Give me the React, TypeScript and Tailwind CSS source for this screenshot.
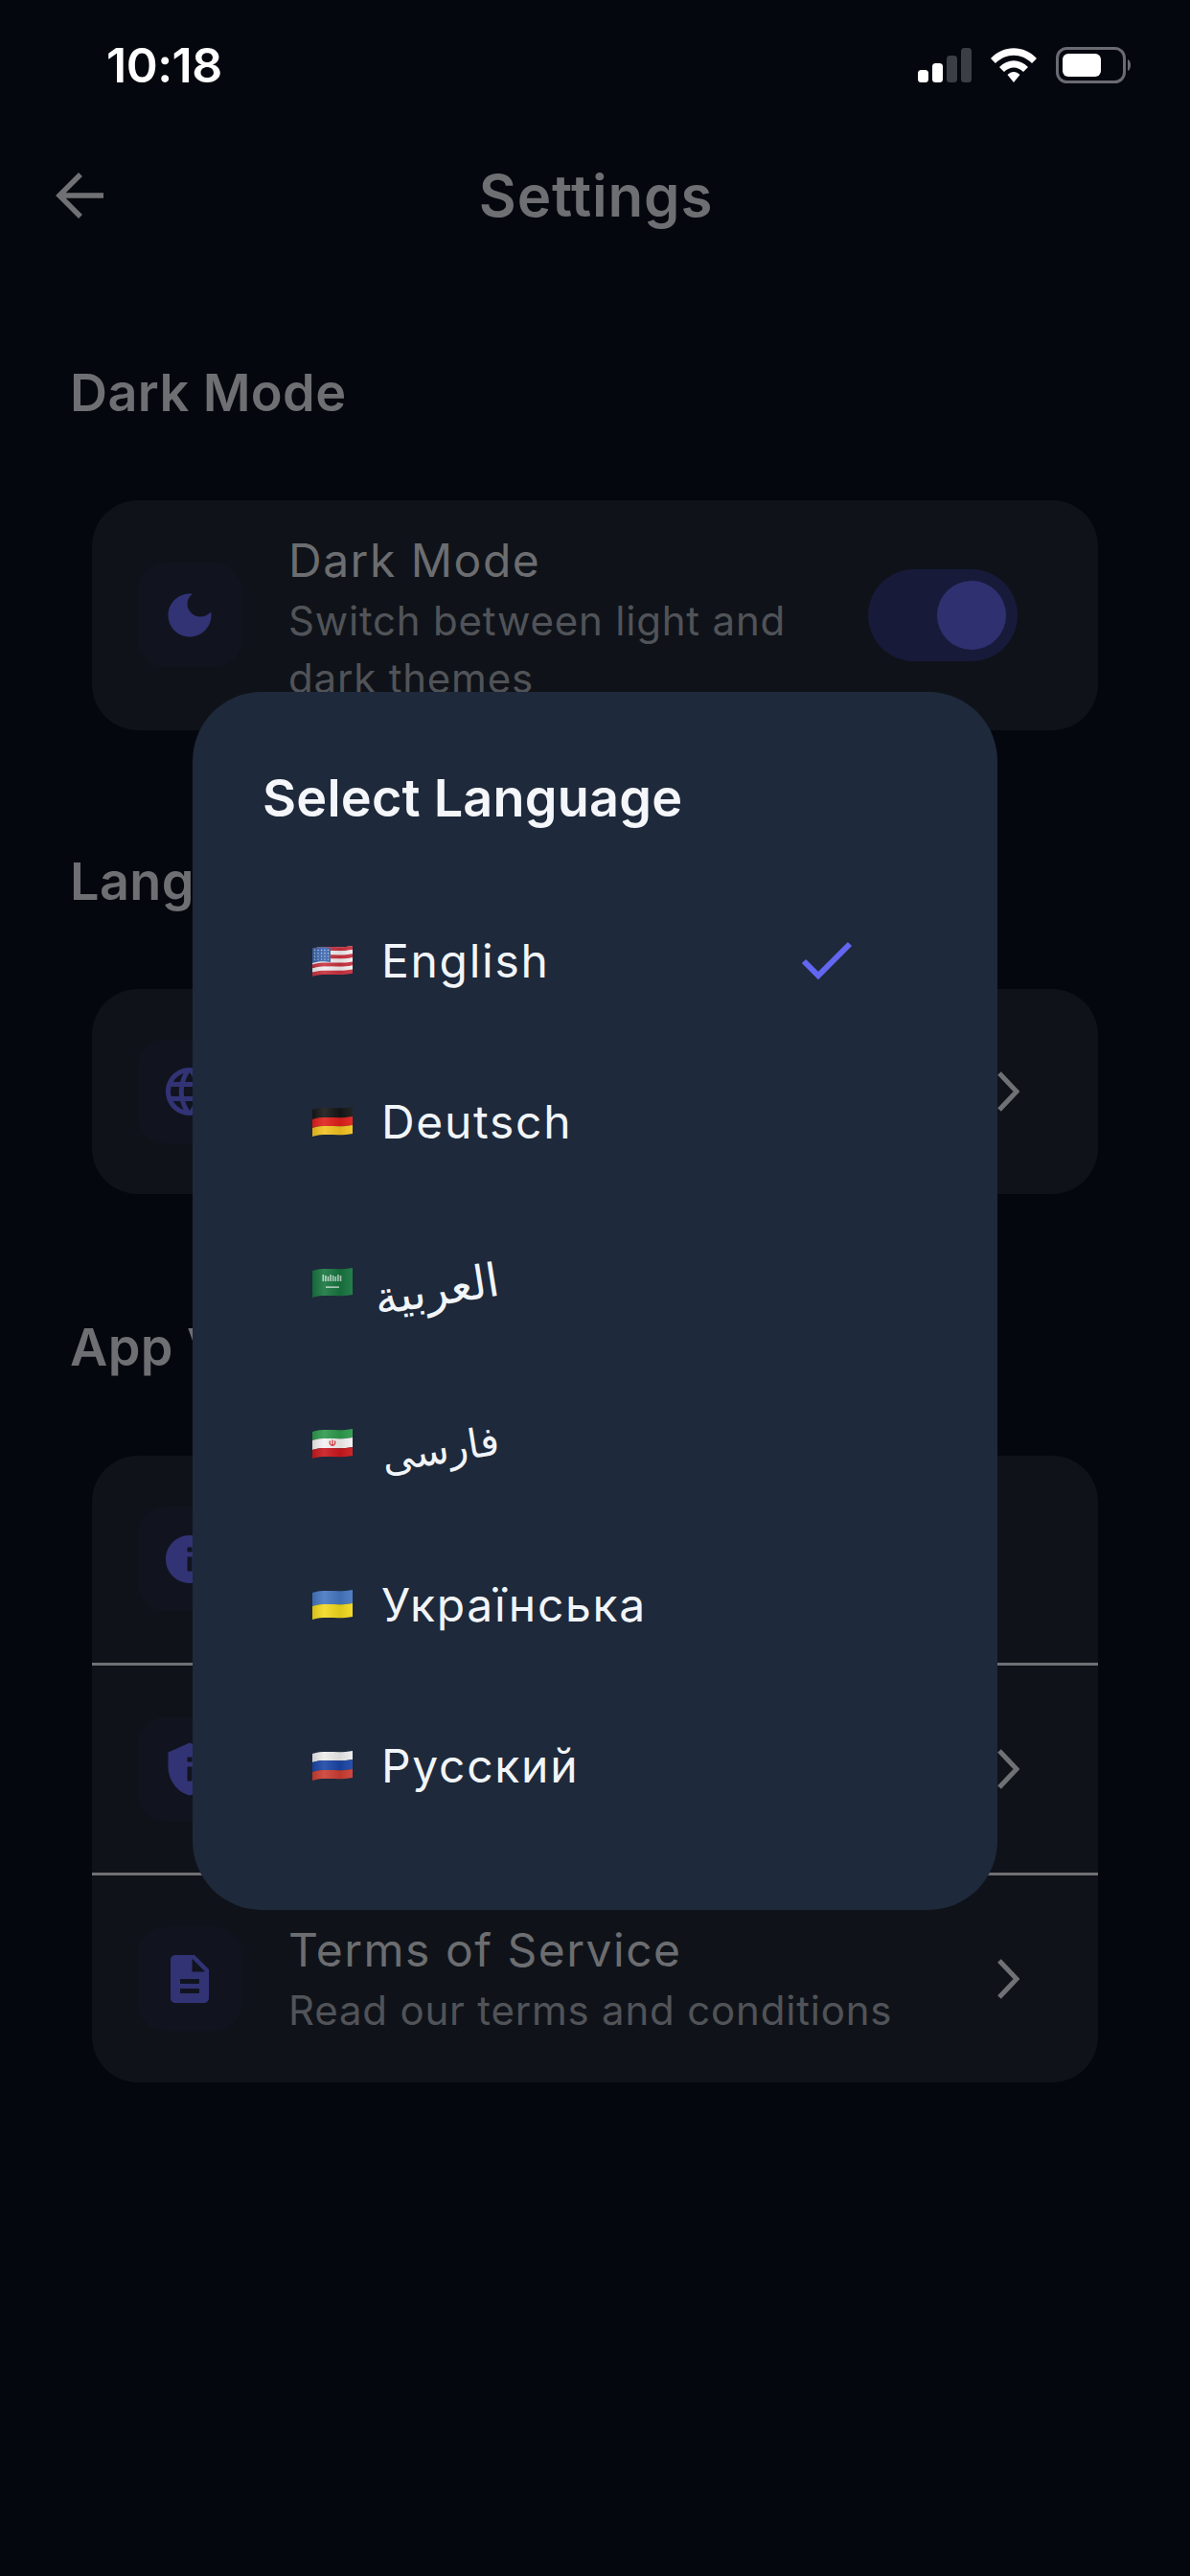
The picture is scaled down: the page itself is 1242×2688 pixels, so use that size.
import React from "react";
import { MdLanguage, MdInfo, MdPrivacyTip, MdDescription } from "react-icons/md";

function band(y1: number, y2: number) {
  return `M0 ${y1 + 3} C 12 ${y1 - 1}, 28 ${y1 + 3}, 42 ${y1} V ${y2} C 28 ${y2 + 3}, 12 ${y2 - 1}, 0 ${y2 + 3} Z`;
}

function Flag({ bands, children }: { bands: [number, number, string][]; children?: React.ReactNode }) {
  return (
    <svg viewBox="0 0 42 34" className="w-[42px] h-[34px] shrink-0">
      <defs>
        <linearGradient id="flag-wave" x1="0" x2="1" y1="0" y2="0">
          <stop offset="0" stopColor="#000" stopOpacity="0.12" />
          <stop offset="0.3" stopColor="#fff" stopOpacity="0.1" />
          <stop offset="0.7" stopColor="#000" stopOpacity="0.08" />
          <stop offset="1" stopColor="#fff" stopOpacity="0.06" />
        </linearGradient>
      </defs>
      {bands.map(([a, b, c], i) => (
        <path key={i} d={band(a, b)} fill={c} />
      ))}
      {children}
      <path d={band(1, 29)} fill="url(#flag-wave)" />
    </svg>
  );
}

const US = () => {
  const stripes: [number, number, string][] = [];
  for (let i = 0; i < 7; i++) {
    stripes.push([1 + i * 4.1, 5.2 + i * 4.1, i % 2 === 0 ? "#c8323f" : "#f1eef0"]);
  }
  stripes[0][1] = 5;
  return (
    <Flag bands={[[1, 29, "#f1eef0"], ...stripes]}>
      <path d="M0 4 C 6 2, 12 2, 19 3 V 18 C 12 17, 6 17, 0 19 Z" fill="#3b66ad" />
      {[0, 1, 2, 3].map((r) =>
        [0, 1, 2, 3, 4].map((c) => (
          <circle key={`${r}-${c}`} cx={2.5 + c * 3.5} cy={5.5 + r * 3.2} r="0.7" fill="#c9d6ee" />
        ))
      )}
    </Flag>
  );
};
const DE = () => <Flag bands={[[1, 11, "#161616"], [11, 20, "#e0201b"], [20, 29, "#f2c321"]]} />;
const SA = () => (
  <Flag bands={[[1, 29, "#17753f"]]}>
    {[0, 1, 2, 3, 4, 5, 6, 7].map((i) => (
      <rect key={i} x={10.5 + i * 2.6} y={8 + (i % 3)} width="1.6" height={7 - (i % 3)} fill="#cfe3d6" opacity="0.85" />
    ))}
    <rect x="14" y="20.5" width="14" height="1.2" fill="#e4efe8" />
  </Flag>
);
const IR = () => (
  <Flag bands={[[1, 10, "#2d9a4c"], [10, 20, "#f3f1f1"], [20, 29, "#c9181e"]]}>
    <path d="M21 12.5 V 19 M18.5 13.5 C 17.5 16, 18.5 18, 21 18.5 C 23.5 18, 24.5 16, 23.5 13.5" fill="none" stroke="#d8232a" strokeWidth="1.2" />
  </Flag>
);
const UA = () => <Flag bands={[[1, 15, "#4577c1"], [15, 29, "#f2d91f"]]} />;
const RU = () => <Flag bands={[[1, 10, "#ececec"], [10, 20, "#1b45a6"], [20, 29, "#cb3d33"]]} />;

const languages: { flag: React.ReactNode; label: string; script?: string }[] = [
  { flag: <US />, label: "English" },
  { flag: <DE />, label: "Deutsch" },
  { flag: <SA />, label: "العربية", script: "text-[48px] ml-[-8px] -rotate-[9deg] translate-y-[6px]" },
  { flag: <IR />, label: "فارسی", script: "text-[42px] -rotate-[9deg] translate-y-[6px]" },
  { flag: <UA />, label: "Українська" },
  { flag: <RU />, label: "Русский" },
];

function IconBox({ children }: { children: React.ReactNode }) {
  return (
    <div className="w-[108px] h-[108px] rounded-[28px] bg-[#11141f] flex items-center justify-center shrink-0 text-[#323374] text-[60px]">
      {children}
    </div>
  );
}

function Moon() {
  return (
    <svg viewBox="0 0 46 46" className="w-[46px] h-[46px]">
      <path
        fillRule="evenodd"
        d="M23 0.5 C 24 0.5, 25 0.6, 26 0.7 C 22.5 3.2, 20.5 7, 20.5 11 C 20.5 18.5, 26.5 24.5, 34 24.5 C 38 24.5, 42.5 22.5, 45.3 19.5 C 45.4 20.6, 45.5 21.8, 45.5 23 C 45.5 35.4, 35.4 45.5, 23 45.5 C 10.6 45.5, 0.5 35.4, 0.5 23 C 0.5 10.6, 10.6 0.5, 23 0.5 Z"
        fill="currentColor"
      />
    </svg>
  );
}

function Chevron() {
  return (
    <svg viewBox="0 0 24 42" className="w-[24px] h-[42px] shrink-0 mr-[-2px]" fill="none" stroke="#707174" strokeWidth="5">
      <path d="M3 2 L21 21 L3 40" />
    </svg>
  );
}

function Row({ icon, title, sub, chevron = true, height = "h-[216px]" }: { icon: React.ReactNode; title?: string; sub?: string; chevron?: boolean; height?: string }) {
  return (
    <div className={`flex items-center ${height} pl-[48px] pr-[84px] gap-[49px]`}>
      <IconBox>{icon}</IconBox>
      <div className="flex-1 min-w-0">
        {title && <div className="text-[48px] leading-[66px] tracking-[1.5px] text-[#6c6d70] whitespace-nowrap">{title}</div>}
        {sub && <div className="text-[42px] leading-[60px] tracking-[0.8px] text-[#515358] whitespace-nowrap">{sub}</div>}
      </div>
      {chevron && <Chevron />}
    </div>
  );
}

function SectionTitle({ children, className }: { children: React.ReactNode; className: string }) {
  return <h2 className={`text-[54px] leading-[66px] font-semibold tracking-[0.4px] text-[#6e6f72] ml-[73px] ${className}`}>{children}</h2>;
}

function Divider() {
  return <div className="h-[3px] bg-[#6f7073]" />;
}

export default function App() {
  return (
    <div className="relative w-[1242px] h-[2688px] overflow-hidden bg-[#05070f] font-['Inter','Noto_Sans',sans-serif]">
      <div className="flex items-center justify-between h-[136px] pl-[111px] pr-[60px]">
        <span className="text-[50px] font-semibold text-white tracking-[-0.5px]">10:18</span>
        <div className="flex items-center gap-[20px]">
          <svg viewBox="0 0 56 36" className="w-[56px] h-[36px]">
            <rect x="0" y="23" width="11" height="13" rx="3.5" fill="#fff" />
            <rect x="15" y="16" width="11" height="20" rx="3.5" fill="#fff" />
            <rect x="30" y="8" width="11" height="28" rx="3.5" fill="#3c3e46" />
            <rect x="45" y="0" width="11" height="36" rx="3.5" fill="#3c3e46" />
          </svg>
          <svg viewBox="0 0 48 37" className="w-[48px] h-[37px]">
            <path d="M0 11 C 13 -3.5, 35 -3.5, 48 11 L 43 16 C 32 5, 16 5, 5 16 Z" fill="#fff" />
            <path d="M9 20 C 18 11, 30 11, 39 20 L 34 25 C 28 19, 20 19, 14 25 Z" fill="#fff" />
            <path d="M17.5 28 C 21.5 24, 26.5 24, 30.5 28 L 24 36 Z" fill="#fff" />
          </svg>
          <svg viewBox="0 0 80 38" className="w-[80px] h-[38px]">
            <rect x="1.5" y="1.5" width="70" height="35" rx="10" fill="none" stroke="#6a6b72" strokeWidth="3" />
            <rect x="7" y="7" width="40" height="24" rx="6" fill="#fff" />
            <path d="M75 13 C 79 14, 79 24, 75 25 Z" fill="#6a6b72" />
          </svg>
        </div>
      </div>

      <header className="relative h-[136px] flex items-center justify-center">
        <svg viewBox="0 0 52 50" className="absolute left-[58px] top-[43px] w-[52px] h-[50px]" fill="none" stroke="#707174" strokeWidth="5.5">
          <path d="M26 3 L4 25 L26 47 M4 25 H50" />
        </svg>
        <h1 className="text-[60px] font-semibold tracking-[0.8px] text-[#6e6f72] pl-[2px]">Settings</h1>
      </header>

      <SectionTitle className="mt-[105px]">Dark Mode</SectionTitle>
      <section className="mt-[79px] mx-[96px] rounded-[48px] bg-[#0f1319] h-[240px] flex items-center pl-[48px] pr-[84px] gap-[49px]">
        <IconBox><Moon /></IconBox>
        <div className="flex-1 min-w-0 pt-[5px]">
          <div className="text-[48px] leading-[66px] tracking-[1.5px] text-[#6c6d70]">Dark Mode</div>
          <div className="text-[42px] leading-[60px] tracking-[0.8px] text-[#515358]">Switch between light and<br />dark themes</div>
        </div>
        <div className="w-[156px] h-[96px] rounded-full bg-[#181a3a] flex items-center justify-end pr-[12px] shrink-0">
          <div className="w-[72px] h-[72px] rounded-full bg-[#2f3070]" />
        </div>
      </section>

      <SectionTitle className="mt-[125px]">Language</SectionTitle>
      <section className="mt-[79px] mx-[96px] rounded-[48px] bg-[#0f1319]">
        <Row icon={<MdLanguage />} height="h-[214px]" />
      </section>

      <SectionTitle className="mt-[127px]">App Version</SectionTitle>
      <section className="mt-[80px] mx-[96px] rounded-[48px] bg-[#0f1319] overflow-hidden">
        <Row icon={<MdInfo />} chevron={false} />
        <Divider />
        <Row icon={<MdPrivacyTip />} />
        <Divider />
        <Row icon={<MdDescription />} title="Terms of Service" sub="Read our terms and conditions" />
      </section>

      <div className="absolute left-[201px] top-[722px] w-[840px] h-[1271px] rounded-[72px] bg-[#1e293b] pt-[73px] pl-[73px] pr-[144px]">
        <h3 className="text-[54px] leading-[76px] font-semibold text-[#f4f6fa] tracking-[0.2px]">Select Language</h3>
        <ul className="mt-[48px]">
          {languages.map((l) => (
            <li key={l.label} className="flex items-center h-[168px] pl-[52px] gap-[30px]">
              {l.flag}
              {l.script ? (
                <span className={`inline-block leading-[72px] text-[#f1f5f9] font-['DejaVu_Sans',sans-serif] ${l.script}`}>{l.label}</span>
              ) : (
                <span className="text-[48px] leading-[72px] tracking-[1.7px] text-[#f1f5f9]">{l.label}</span>
              )}
              {l.label === "English" && (
                <svg viewBox="0 0 54 42" className="ml-auto mr-[7px] w-[54px] h-[42px]" fill="none" stroke="#6366f1" strokeWidth="6">
                  <path d="M3 21 L18 36 L51 3" />
                </svg>
              )}
            </li>
          ))}
        </ul>
      </div>
    </div>
  );
}
